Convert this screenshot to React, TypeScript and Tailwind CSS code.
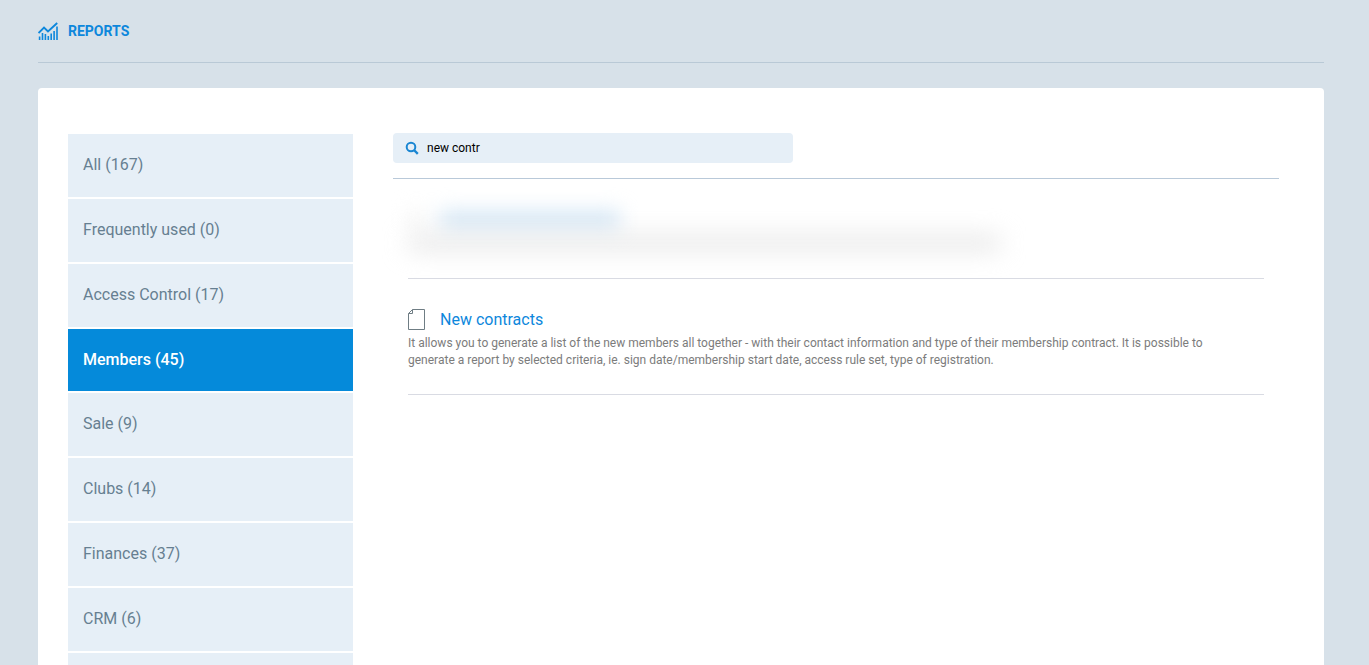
import { useState } from "react"

type Category = {
    name: string
    count: number
}

const CATEGORIES: Category[] = [
    { name: "All", count: 167 },
    { name: "Frequently used", count: 0 },
    { name: "Access Control", count: 17 },
    { name: "Members", count: 45 },
    { name: "Sale", count: 9 },
    { name: "Clubs", count: 14 },
    { name: "Finances", count: 37 },
    { name: "CRM", count: 6 },
]

function ReportsIcon() {
    return (
        <svg className="h-5 w-5 shrink-0" viewBox="0 0 20 20" fill="none" stroke="#0d87dc" aria-hidden="true">
            <path d="M0.5 12 6 6.5l4 4L19.2 2" strokeWidth="1.9" />
            <path d="M1.6 15.5V19M4.5 12V19M7.4 13v6M10.3 15v4M13.2 12.5V19M16.1 10v9M19 5.5V19" strokeWidth="1.6" />
        </svg>
    )
}

function SearchIcon() {
    return (
        <svg className="h-[14px] w-[14px] shrink-0" viewBox="0 0 14 14" fill="none" stroke="#1a86d2" aria-hidden="true">
            <circle cx="6" cy="6" r="4.3" strokeWidth="2" />
            <path d="M9 9l3.8 3.8" strokeWidth="2.4" />
        </svg>
    )
}

function DocumentIcon() {
    return (
        <svg className="h-[22px] w-[18px] shrink-0" viewBox="0 0 18 22" fill="none" stroke="#6f7d84" aria-hidden="true">
            <path d="M4.5 0.5h12v20H0.5v-16z" />
            <path d="M4.5 0.5v4h-4" />
        </svg>
    )
}

export default function App() {
    const [active, setActive] = useState("Members")
    const [query, setQuery] = useState("new contr")

    return (
        <div className="flex h-screen flex-col overflow-hidden bg-[#d7e1e9] pr-[45px] pl-[38px] font-[Roboto,sans-serif]">
            <header className="flex h-[63px] shrink-0 items-center gap-[10px] border-b border-[#b9c9d6] text-[#0d87dc]">
                <ReportsIcon />
                <h1 className="text-sm font-bold">REPORTS</h1>
            </header>

            <main className="mt-[25px] flex min-h-0 grow gap-10 rounded-t bg-white pt-[45px] pr-[45px] pl-[30px]">
                <nav className="mt-px flex w-[285px] shrink-0 flex-col gap-[2px]" aria-label="Report categories">
                    {CATEGORIES.map((category) => (
                        <button
                            key={category.name}
                            type="button"
                            onClick={() => setActive(category.name)}
                            className={
                                category.name === active
                                    ? "h-[62px] shrink-0 bg-[#058ada] px-[15px] text-left text-base font-medium text-white"
                                    : "h-[63px] shrink-0 bg-[#e6eff7] px-[15px] pb-[2px] text-left text-base text-[#667f91]"
                            }
                        >
                            {category.name} ({category.count})
                        </button>
                    ))}
                    <div className="grow bg-[#e6eff7]" />
                </nav>

                <section className="min-w-0 grow">
                    <div className="border-b border-[#b9c9d9] pb-[15px]">
                        <label className="flex h-[30px] w-full max-w-[400px] items-center gap-2 rounded bg-[#e6eff7] px-3">
                            <SearchIcon />
                            <input
                                type="text"
                                aria-label="Search reports"
                                value={query}
                                onChange={(e) => setQuery(e.target.value)}
                                className="min-w-0 grow bg-transparent text-xs text-black outline-none"
                            />
                        </label>
                    </div>

                    <div className="px-[15px]">
                        {/* obscured report */}
                        <div className="h-[100px] border-b border-[#d9dbe3] pt-8" aria-hidden="true">
                            <div className="flex gap-4 blur-[10px]">
                                <div className="h-[18px] w-4 bg-[#f4f4f4]" />
                                <div className="h-[18px] w-[180px] bg-[#d3e6f5]" />
                            </div>
                            <div className="mt-2 h-3 w-full max-w-[592px] bg-[#e0e0e0] blur-[12px]" />
                        </div>

                        <article className="border-b border-[#d9dbe3] pt-[30px] pb-[25px]">
                            <h2 className="flex h-[22px] items-center gap-[14px] text-base">
                                <DocumentIcon />
                                <a href="#new-contracts" className="text-[#0d87dc]">
                                    New contracts
                                </a>
                            </h2>
                            <p className="mt-1 max-w-[810px] text-xs leading-[17px] text-[#7c7c7c]">
                                It allows you to generate a list of the new members all together - with their contact
                                information and type of their membership contract. It is possible to generate a report
                                by selected criteria, ie. sign date/membership start date, access rule set, type of
                                registration.
                            </p>
                        </article>
                    </div>
                </section>
            </main>
        </div>
    )
}
